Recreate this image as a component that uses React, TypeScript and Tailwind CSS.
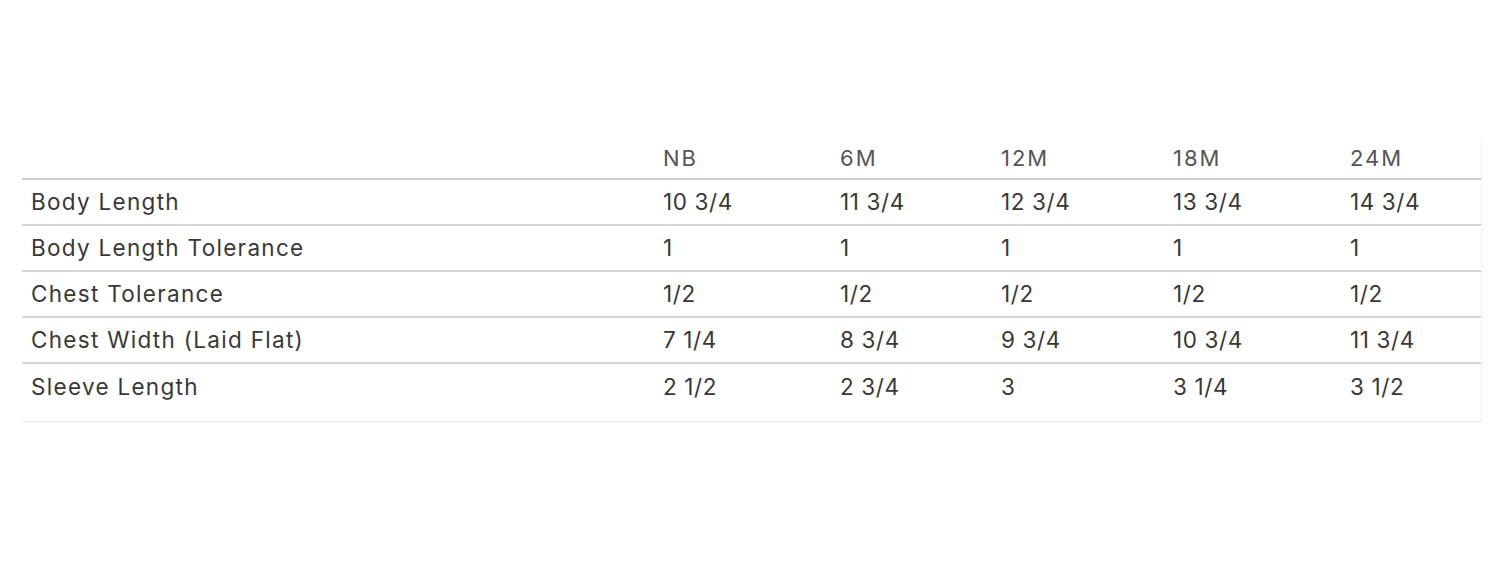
import React from "react";

const cols = ["NB", "6M", "12M", "18M", "24M"];
const rows: [string, string[]][] = [
  ["Body Length", ["10 3/4", "11 3/4", "12 3/4", "13 3/4", "14 3/4"]],
  ["Body Length Tolerance", ["1", "1", "1", "1", "1"]],
  ["Chest Tolerance", ["1/2", "1/2", "1/2", "1/2", "1/2"]],
  ["Chest Width (Laid Flat)", ["7 1/4", "8 3/4", "9 3/4", "10 3/4", "11 3/4"]],
  ["Sleeve Length", ["2 1/2", "2 3/4", "3", "3 1/4", "3 1/2"]],
];

const grid = "grid grid-cols-[633px_177px_161px_172px_177px_140px]";

export default function App() {
  return (
    <div
      className="w-[1505px] h-[562px] bg-white pt-[139px] pl-[22px]"
      style={{ fontFamily: "Inter, 'Open Sans', sans-serif" }}
    >
      <div className="w-[1460px] border-r border-[#f1f1f1]">
        <div className={`${grid} h-[41px] items-center border-b-2 border-[#cfcfcf] text-[22px] text-[#555555] tracking-[2px]`}>
          <div />
          {cols.map((c) => (
            <div key={c} className="pl-[8px]">{c}</div>
          ))}
        </div>
        {rows.map(([label, vals], i) => {
          const last = i === rows.length - 1;
          return (
            <div
              key={label}
              className={`${grid} text-[22.5px] text-[#383838] ${
                last ? "h-[58px] items-start pt-[6px] border-b border-[#e6e6e6]" : "h-[46px] items-center border-b-2 border-[#d6d6d6]"
              }`}
            >
              <div className="pl-[9px] tracking-[1.3px]">{label}</div>
              {vals.map((v, j) => (
                <div key={j} className="pl-[8px] tracking-[0.6px]">{v}</div>
              ))}
            </div>
          );
        })}
      </div>
    </div>
  );
}
